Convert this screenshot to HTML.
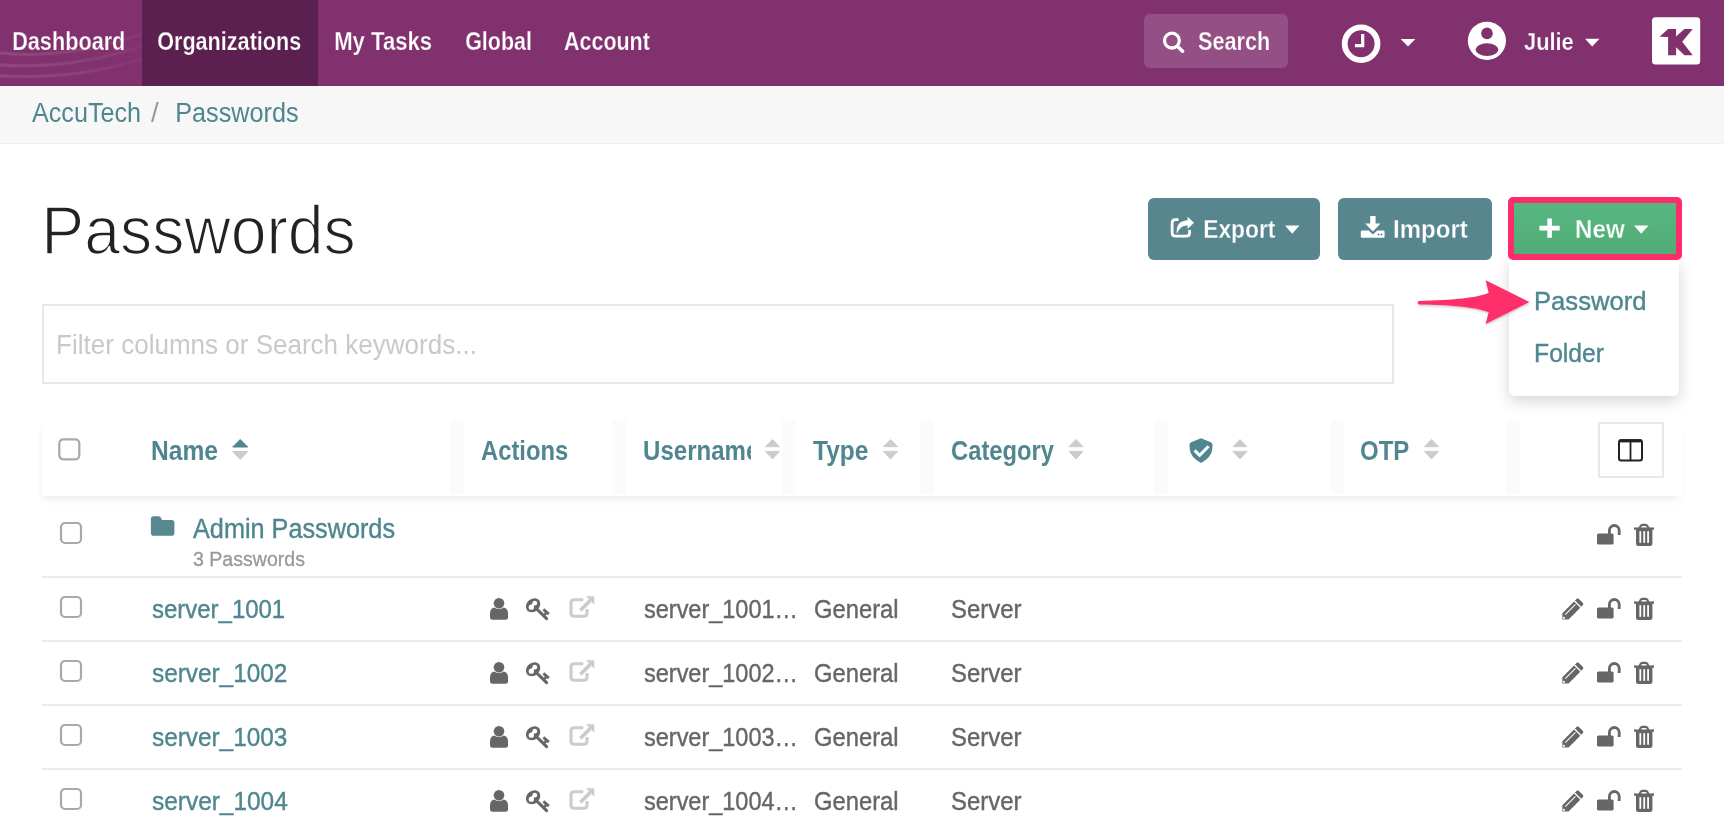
<!DOCTYPE html>
<html><head><meta charset="utf-8"><title>Passwords</title>
<style>
html,body{margin:0;padding:0;width:1724px;height:830px;overflow:hidden;background:#fff;font-family:"Liberation Sans",sans-serif;}
.b{position:absolute;box-sizing:border-box;}
.t{position:absolute;white-space:nowrap;font-family:"Liberation Sans",sans-serif;}
svg{position:absolute;left:0;top:0;overflow:visible}
</style></head><body>
<!-- top nav -->
<div class="b" style="left:0;top:0;width:1724px;height:86px;background:#82316f"></div>
<svg width="142" height="86" style="left:0;top:0;overflow:hidden"><defs><linearGradient id="sw" x1="0" y1="0" x2="1" y2="0"><stop offset="0" stop-color="#fff" stop-opacity="0.11"/><stop offset="0.6" stop-color="#fff" stop-opacity="0.07"/><stop offset="1" stop-color="#fff" stop-opacity="0.02"/></linearGradient></defs>
  <path d="M-5 52.5 Q70 61 150 31" stroke="url(#sw)" stroke-width="3" fill="none"/>
  <path d="M-5 64.5 Q75 71 150 43" stroke="url(#sw)" stroke-width="3" fill="none"/>
  <path d="M-5 75.5 Q80 81 150 56" stroke="url(#sw)" stroke-width="3" fill="none"/>
</svg>
<div class="b" style="left:142px;top:0;width:176px;height:86px;background:#5b2050"></div>
<div class="b" style="left:1144px;top:14px;width:144px;height:54px;background:rgba(255,255,255,0.15);border-radius:6px"></div>
<!-- breadcrumb -->
<div class="b" style="left:0;top:86px;width:1724px;height:58px;background:#f7f7f7;border-bottom:1px solid #efefef"></div>

<!-- buttons -->
<div class="b" style="left:1148px;top:198px;width:172px;height:62px;background:#57868e;border-radius:6px"></div>
<div class="b" style="left:1338px;top:198px;width:154px;height:62px;background:#57868e;border-radius:6px"></div>
<!-- dropdown -->
<div class="b" style="left:1509px;top:260px;width:170px;height:136px;background:#fff;border-radius:0 0 6px 6px;box-shadow:0 5px 15px rgba(0,0,0,0.17)"></div>
<div class="b" style="left:1508px;top:197px;width:174px;height:63px;background:linear-gradient(#57b780,#52ac77);border:6px solid #fd2c6a;border-radius:5px"></div>

<!-- search input -->
<div class="b" style="left:42px;top:304px;width:1352px;height:80px;border:2px solid #e8e8e8;background:#fff"></div>

<!-- table header -->
<div class="b" style="left:42px;top:421px;width:1640px;height:75px;background:#fff;box-shadow:0 7px 9px -3px rgba(0,0,0,0.06), -4px 4px 7px -3px rgba(0,0,0,0.035)"></div>
<div class="b" style="left:450px;top:420px;width:14px;height:74px;background:#fbfbfb"></div>
<div class="b" style="left:612px;top:420px;width:14px;height:74px;background:#fbfbfb"></div>
<div class="b" style="left:782px;top:420px;width:14px;height:74px;background:#fbfbfb"></div>
<div class="b" style="left:920px;top:420px;width:14px;height:74px;background:#fbfbfb"></div>
<div class="b" style="left:1154px;top:420px;width:14px;height:74px;background:#fbfbfb"></div>
<div class="b" style="left:1331px;top:420px;width:13px;height:74px;background:#fbfbfb"></div>
<div class="b" style="left:1506px;top:420px;width:14px;height:74px;background:#fbfbfb"></div>
<div class="b" style="left:1598px;top:422px;width:66px;height:56px;border:2px solid #e8e8e8;background:#fff"></div>

<!-- row lines -->
<div class="b" style="left:42px;top:576px;width:1640px;height:2px;background:#ebebeb"></div>
<div class="b" style="left:42px;top:640px;width:1640px;height:2px;background:#ebebeb"></div>
<div class="b" style="left:42px;top:704px;width:1640px;height:2px;background:#ebebeb"></div>
<div class="b" style="left:42px;top:768px;width:1640px;height:2px;background:#ebebeb"></div>

<!--ICONS-->
<svg width="1724" height="830">
  <defs>
    <g id="chk"><rect x="1" y="1" width="20" height="20" rx="4" ry="4" fill="none" stroke="#a9a9a9" stroke-width="2.2"/></g>
    <g id="sortg"><path d="M0.5 7.7 L7.5 0.5 L14.5 7.7 Z" fill="#cccccc" stroke="#cccccc" stroke-width="1" stroke-linejoin="round"/><path d="M0.5 12.4 L14.5 12.4 L7.5 20 Z" fill="#cccccc" stroke="#cccccc" stroke-width="1" stroke-linejoin="round"/></g>
    <g id="user">
      <circle cx="9" cy="5.3" r="5.3" fill="#666"/>
      <path d="M4.2 9.6 Q9 12.6 13.8 9.6 Q18 10.6 18 15.5 L18 19 Q18 21.8 15.5 21.8 L2.5 21.8 Q0 21.8 0 19 L0 15.5 Q0 10.6 4.2 9.6 Z" fill="#666"/>
    </g>
    <g id="key">
      <ellipse cx="7.1" cy="7.0" rx="7.9" ry="6.3" transform="rotate(-42 7.1 7.0)" fill="#666"/>
      <circle cx="5.3" cy="9.0" r="2.6" fill="#fff"/>
      <circle cx="8.8" cy="5.0" r="2.4" fill="#fff"/>
      <path d="M5.5 8.2 L8.2 5.4" stroke="#fff" stroke-width="2.6"/>
      <path d="M10.4 10.4 L20.6 20.4" stroke="#666" stroke-width="3" stroke-linecap="round"/>
      <path d="M17.4 11.2 L22.8 15.9" stroke="#666" stroke-width="2.8"/>
      <path d="M18.2 16.9 L21 14" stroke="#666" stroke-width="2.6"/>
    </g>
    <g id="ext">
      <path d="M14 3.7 L5 3.7 Q1.7 3.7 1.7 7 L1.7 17 Q1.7 20.3 5 20.3 L14.4 20.3 Q17.7 20.3 17.7 17 L17.7 13" fill="none" stroke="#cccccc" stroke-width="3.1"/>
      <path d="M11 14.4 L21.6 3.9" stroke="#cccccc" stroke-width="3.6"/>
      <path d="M16.7 0.3 L25 0.3 L25 8.8 Z" fill="#cccccc"/>
    </g>
    <g id="pencil">
      <g transform="translate(0.3,21.5) rotate(-45)">
        <path d="M0 0 L4.5 -4.4 L21 -4.4 L21 4.4 L4.5 4.4 Z" fill="#666"/>
        <path d="M1.4 -1.1 L3.2 -1.1 L3.2 1.1 L1.4 1.1 Z" fill="#fff"/>
        <path d="M5.5 -1.4 L20 -1.4" stroke="#fff" stroke-width="1.1"/>
        <path d="M22.4 -4.4 L24.8 -4.4 Q26.2 -4.4 26.2 -3 L26.2 3 Q26.2 4.4 24.8 4.4 L22.4 4.4 Z" fill="#666"/>
      </g>
    </g>
    <g id="unlock">
      <rect x="0" y="9" width="16.6" height="11" rx="1.6" fill="#666"/>
      <path d="M12.4 9.5 L12.4 5.9 A4.9 4.9 0 0 1 22.2 5.9 L22.2 10.5" fill="none" stroke="#666" stroke-width="2.8"/>
    </g>
    <g id="trash">
      <path d="M0 4.6 L20 4.6" stroke="#666" stroke-width="2.3"/>
      <path d="M5.4 4.2 L6.6 2 Q7.2 0.9 8.4 0.9 L11.6 0.9 Q12.8 0.9 13.4 2 L14.6 4.2" fill="none" stroke="#666" stroke-width="2.2"/>
      <path d="M2 5 L18.4 5 L18.4 19.5 Q18.4 22 15.9 22 L4.5 22 Q2 22 2 19.5 Z" fill="#666"/>
      <rect x="5.4" y="7.2" width="1.8" height="11.6" fill="#fff"/>
      <rect x="9.3" y="7.2" width="1.8" height="11.6" fill="#fff"/>
      <rect x="13.2" y="7.2" width="1.8" height="11.6" fill="#fff"/>
    </g>
  </defs>

  <!-- nav icons -->
  <circle cx="1171.9" cy="40.6" r="7.4" fill="none" stroke="#fff" stroke-width="3.3"/>
  <path d="M1177.4 46.2 L1182.6 51.2" stroke="#fff" stroke-width="3.6" stroke-linecap="round"/>
  <circle cx="1361.1" cy="43.7" r="16.4" fill="none" stroke="#fff" stroke-width="5.8"/>
  <path d="M1362.7 34 L1362.7 45.55 L1354.9 45.55" fill="none" stroke="#fff" stroke-width="3.2"/>
  <path d="M1400.6 39 L1415.4 39 L1408 46.5 Z" fill="#fff"/>
  <circle cx="1486.9" cy="40.8" r="19.1" fill="#fff"/>
  <circle cx="1487" cy="33.4" r="5.8" fill="#82316f"/>
  <ellipse cx="1487" cy="49.6" rx="11.4" ry="6.3" fill="#82316f"/>
  <path d="M1585 38.7 L1599.5 38.7 L1592.2 46.5 Z" fill="#fff"/>
  <rect x="1652" y="17.2" width="48.2" height="47.2" rx="3.5" fill="#fff"/>
  <path d="M1659.5 36.8 L1668.1 28.9 L1676.1 28.9 L1676.1 36.4 L1684.4 28.9 L1692.7 28.9 L1682.2 41.8 L1692.7 55.2 L1684.4 55.2 L1676.1 47.2 L1676.1 55.2 L1668.1 55.2 L1668.1 36.9 Z" fill="#82316f"/>

  <!-- button icons -->
  <path d="M1178.5 219.7 L1175.6 219.7 Q1172.1 219.7 1172.1 223.2 L1172.1 232.7 Q1172.1 236.2 1175.6 236.2 L1186.1 236.2 Q1189.6 236.2 1189.6 232.7 L1189.6 230" fill="none" stroke="#fff" stroke-width="2.8"/>
  <path d="M1176.9 233.9 Q1175.2 221 1187.6 220.2 L1187.6 216.7 L1194 222.8 L1187.6 228.9 L1187.6 225.4 Q1180 225 1176.9 233.9 Z" fill="#fff"/>
  <path d="M1285 225.5 L1299.5 225.5 L1292.2 233.8 Z" fill="#fff"/>
  <path d="M1370.2 216 L1375.6 216 L1375.6 223.6 L1380.6 223.6 L1372.9 231.6 L1365.2 223.6 L1370.2 223.6 Z" fill="#fff"/>
  <path d="M1362.2 230.4 L1368.6 230.4 L1372.9 234.4 L1377.2 230.4 L1383.3 230.4 Q1384.6 230.4 1384.6 231.8 L1384.6 236.4 Q1384.6 237.8 1383.3 237.8 L1362.2 237.8 Q1360.8 237.8 1360.8 236.4 L1360.8 231.8 Q1360.8 230.4 1362.2 230.4 Z" fill="#fff"/>
  <circle cx="1378.6" cy="234.4" r="1" fill="#57868e"/><circle cx="1381.6" cy="234.4" r="1" fill="#57868e"/>
  <path d="M1549.6 218.4 L1549.6 237.8 M1539.4 228.1 L1559.7 228.1" stroke="#fff" stroke-width="4.6"/>
  <path d="M1634 225.5 L1648.5 225.5 L1641.2 233.8 Z" fill="#fff"/>

  <!-- pink arrow -->
  <g filter="url(#sh)">
  <path d="M1419.4 300.9 C1455 300.2 1478 297.5 1488.7 292.7 L1485.6 280.2 L1529.4 302.1 L1485.6 324 L1488.7 312.3 C1478 307.8 1455 304.9 1419.4 304.5 A1.8 1.8 0 0 1 1419.4 300.9 Z" fill="#fe2d6a"/>
  </g>
  <defs><filter id="sh" x="-10%" y="-30%" width="120%" height="160%"><feDropShadow dx="0.5" dy="1.2" stdDeviation="1" flood-color="#000" flood-opacity="0.25"/></filter></defs>

  <!-- table header icons -->
  <g transform="translate(58.3,438.3)"><rect x="1" y="1" width="20" height="20" rx="4" ry="4" fill="none" stroke="#a9a9a9" stroke-width="2.2"/></g>
  <path d="M232.7 447 L240.2 439.5 L247.7 447 Z" fill="#4f8690" stroke="#4f8690" stroke-width="1" stroke-linejoin="round"/>
  <path d="M232.7 451.5 L247.7 451.5 L240.2 459.5 Z" fill="#cccccc" stroke="#cccccc" stroke-width="1" stroke-linejoin="round"/>
  <g transform="translate(765,439)"><path d="M0.5 7.7 L7.5 0.5 L14.5 7.7 Z" fill="#cccccc" stroke="#cccccc" stroke-width="1" stroke-linejoin="round"/><path d="M0.5 12.4 L14.5 12.4 L7.5 20 Z" fill="#cccccc" stroke="#cccccc" stroke-width="1" stroke-linejoin="round"/></g>
  <g transform="translate(883,439)"><path d="M0.5 7.7 L7.5 0.5 L14.5 7.7 Z" fill="#cccccc" stroke="#cccccc" stroke-width="1" stroke-linejoin="round"/><path d="M0.5 12.4 L14.5 12.4 L7.5 20 Z" fill="#cccccc" stroke="#cccccc" stroke-width="1" stroke-linejoin="round"/></g>
  <g transform="translate(1068.5,439)"><path d="M0.5 7.7 L7.5 0.5 L14.5 7.7 Z" fill="#cccccc" stroke="#cccccc" stroke-width="1" stroke-linejoin="round"/><path d="M0.5 12.4 L14.5 12.4 L7.5 20 Z" fill="#cccccc" stroke="#cccccc" stroke-width="1" stroke-linejoin="round"/></g>
  <g transform="translate(1232.5,439)"><path d="M0.5 7.7 L7.5 0.5 L14.5 7.7 Z" fill="#cccccc" stroke="#cccccc" stroke-width="1" stroke-linejoin="round"/><path d="M0.5 12.4 L14.5 12.4 L7.5 20 Z" fill="#cccccc" stroke="#cccccc" stroke-width="1" stroke-linejoin="round"/></g>
  <g transform="translate(1424,439)"><path d="M0.5 7.7 L7.5 0.5 L14.5 7.7 Z" fill="#cccccc" stroke="#cccccc" stroke-width="1" stroke-linejoin="round"/><path d="M0.5 12.4 L14.5 12.4 L7.5 20 Z" fill="#cccccc" stroke="#cccccc" stroke-width="1" stroke-linejoin="round"/></g>
  <path d="M1201 438.2 L1191.2 442.2 Q1189.4 443 1189.5 444.9 L1189.8 449.5 Q1190.6 457.5 1201 462.9 Q1211.4 457.5 1212.2 449.5 L1212.5 444.9 Q1212.6 443 1210.8 442.2 Z" fill="#4f8690"/>
  <path d="M1194.6 450.4 L1199.6 455.4 L1208.6 446.3" fill="none" stroke="#fff" stroke-width="3"/>
  <rect x="1619" y="440.2" width="23" height="20.2" rx="2.2" fill="none" stroke="#222" stroke-width="2"/>
  <path d="M1619.5 440.8 L1641.5 440.8" stroke="#222" stroke-width="3.2"/>
  <path d="M1630.5 440.4 L1630.5 460.2" stroke="#222" stroke-width="1.8"/>

  <!-- folder row -->
  <g transform="translate(60,522)"><rect x="1" y="1" width="20" height="20" rx="4" ry="4" fill="none" stroke="#a9a9a9" stroke-width="2.2"/></g>
  <path d="M153.5 516.2 L158 516.2 Q160.8 516.2 161.4 518.6 L161.8 520 L171.6 520 Q174.4 520 174.4 522.8 L174.4 532.9 Q174.4 535.7 171.6 535.7 L153.7 535.7 Q150.9 535.7 150.9 532.9 L150.9 518.8 Q150.9 516.2 153.5 516.2 Z" fill="#57888f"/>
  <g transform="translate(1597,524.5)">
      <rect x="0" y="9" width="16.6" height="11" rx="1.6" fill="#666"/>
      <path d="M12.4 9.5 L12.4 5.9 A4.9 4.9 0 0 1 22.2 5.9 L22.2 10.5" fill="none" stroke="#666" stroke-width="2.8"/>
    </g>
  <g transform="translate(1634,524)">
      <path d="M0 4.6 L20 4.6" stroke="#666" stroke-width="2.3"/>
      <path d="M5.4 4.2 L6.6 2 Q7.2 0.9 8.4 0.9 L11.6 0.9 Q12.8 0.9 13.4 2 L14.6 4.2" fill="none" stroke="#666" stroke-width="2.2"/>
      <path d="M2 5 L18.4 5 L18.4 19.5 Q18.4 22 15.9 22 L4.5 22 Q2 22 2 19.5 Z" fill="#666"/>
      <rect x="5.4" y="7.2" width="1.8" height="11.6" fill="#fff"/>
      <rect x="9.3" y="7.2" width="1.8" height="11.6" fill="#fff"/>
      <rect x="13.2" y="7.2" width="1.8" height="11.6" fill="#fff"/>
    </g>

  <!-- server rows -->
  <g transform="translate(0,0)">
    <g transform="translate(60,596)"><rect x="1" y="1" width="20" height="20" rx="4" ry="4" fill="none" stroke="#a9a9a9" stroke-width="2.2"/></g>
    <g transform="translate(490,598)">
      <circle cx="9" cy="5.3" r="5.3" fill="#666"/>
      <path d="M4.2 9.6 Q9 12.6 13.8 9.6 Q18 10.6 18 15.5 L18 19 Q18 21.8 15.5 21.8 L2.5 21.8 Q0 21.8 0 19 L0 15.5 Q0 10.6 4.2 9.6 Z" fill="#666"/>
    </g>
    <g transform="translate(526,598.2)">
      <ellipse cx="7.1" cy="7.0" rx="7.9" ry="6.3" transform="rotate(-42 7.1 7.0)" fill="#666"/>
      <circle cx="5.3" cy="9.0" r="2.6" fill="#fff"/>
      <circle cx="8.8" cy="5.0" r="2.4" fill="#fff"/>
      <path d="M5.5 8.2 L8.2 5.4" stroke="#fff" stroke-width="2.6"/>
      <path d="M10.4 10.4 L20.6 20.4" stroke="#666" stroke-width="3" stroke-linecap="round"/>
      <path d="M17.4 11.2 L22.8 15.9" stroke="#666" stroke-width="2.8"/>
      <path d="M18.2 16.9 L21 14" stroke="#666" stroke-width="2.6"/>
    </g>
    <g transform="translate(569.3,596)">
      <path d="M14 3.7 L5 3.7 Q1.7 3.7 1.7 7 L1.7 17 Q1.7 20.3 5 20.3 L14.4 20.3 Q17.7 20.3 17.7 17 L17.7 13" fill="none" stroke="#cccccc" stroke-width="3.1"/>
      <path d="M11 14.4 L21.6 3.9" stroke="#cccccc" stroke-width="3.6"/>
      <path d="M16.7 0.3 L25 0.3 L25 8.8 Z" fill="#cccccc"/>
    </g>
    <g transform="translate(1562,598)">
      <g transform="translate(0.3,21.5) rotate(-45)">
        <path d="M0 0 L4.5 -4.4 L21 -4.4 L21 4.4 L4.5 4.4 Z" fill="#666"/>
        <path d="M1.4 -1.1 L3.2 -1.1 L3.2 1.1 L1.4 1.1 Z" fill="#fff"/>
        <path d="M5.5 -1.4 L20 -1.4" stroke="#fff" stroke-width="1.1"/>
        <path d="M22.4 -4.4 L24.8 -4.4 Q26.2 -4.4 26.2 -3 L26.2 3 Q26.2 4.4 24.8 4.4 L22.4 4.4 Z" fill="#666"/>
      </g>
    </g>
    <g transform="translate(1597,598.5)">
      <rect x="0" y="9" width="16.6" height="11" rx="1.6" fill="#666"/>
      <path d="M12.4 9.5 L12.4 5.9 A4.9 4.9 0 0 1 22.2 5.9 L22.2 10.5" fill="none" stroke="#666" stroke-width="2.8"/>
    </g>
    <g transform="translate(1634,598)">
      <path d="M0 4.6 L20 4.6" stroke="#666" stroke-width="2.3"/>
      <path d="M5.4 4.2 L6.6 2 Q7.2 0.9 8.4 0.9 L11.6 0.9 Q12.8 0.9 13.4 2 L14.6 4.2" fill="none" stroke="#666" stroke-width="2.2"/>
      <path d="M2 5 L18.4 5 L18.4 19.5 Q18.4 22 15.9 22 L4.5 22 Q2 22 2 19.5 Z" fill="#666"/>
      <rect x="5.4" y="7.2" width="1.8" height="11.6" fill="#fff"/>
      <rect x="9.3" y="7.2" width="1.8" height="11.6" fill="#fff"/>
      <rect x="13.2" y="7.2" width="1.8" height="11.6" fill="#fff"/>
    </g>
  </g>
  <g transform="translate(0,64)">
    <g transform="translate(60,596)"><rect x="1" y="1" width="20" height="20" rx="4" ry="4" fill="none" stroke="#a9a9a9" stroke-width="2.2"/></g>
    <g transform="translate(490,598)">
      <circle cx="9" cy="5.3" r="5.3" fill="#666"/>
      <path d="M4.2 9.6 Q9 12.6 13.8 9.6 Q18 10.6 18 15.5 L18 19 Q18 21.8 15.5 21.8 L2.5 21.8 Q0 21.8 0 19 L0 15.5 Q0 10.6 4.2 9.6 Z" fill="#666"/>
    </g>
    <g transform="translate(526,598.2)">
      <ellipse cx="7.1" cy="7.0" rx="7.9" ry="6.3" transform="rotate(-42 7.1 7.0)" fill="#666"/>
      <circle cx="5.3" cy="9.0" r="2.6" fill="#fff"/>
      <circle cx="8.8" cy="5.0" r="2.4" fill="#fff"/>
      <path d="M5.5 8.2 L8.2 5.4" stroke="#fff" stroke-width="2.6"/>
      <path d="M10.4 10.4 L20.6 20.4" stroke="#666" stroke-width="3" stroke-linecap="round"/>
      <path d="M17.4 11.2 L22.8 15.9" stroke="#666" stroke-width="2.8"/>
      <path d="M18.2 16.9 L21 14" stroke="#666" stroke-width="2.6"/>
    </g>
    <g transform="translate(569.3,596)">
      <path d="M14 3.7 L5 3.7 Q1.7 3.7 1.7 7 L1.7 17 Q1.7 20.3 5 20.3 L14.4 20.3 Q17.7 20.3 17.7 17 L17.7 13" fill="none" stroke="#cccccc" stroke-width="3.1"/>
      <path d="M11 14.4 L21.6 3.9" stroke="#cccccc" stroke-width="3.6"/>
      <path d="M16.7 0.3 L25 0.3 L25 8.8 Z" fill="#cccccc"/>
    </g>
    <g transform="translate(1562,598)">
      <g transform="translate(0.3,21.5) rotate(-45)">
        <path d="M0 0 L4.5 -4.4 L21 -4.4 L21 4.4 L4.5 4.4 Z" fill="#666"/>
        <path d="M1.4 -1.1 L3.2 -1.1 L3.2 1.1 L1.4 1.1 Z" fill="#fff"/>
        <path d="M5.5 -1.4 L20 -1.4" stroke="#fff" stroke-width="1.1"/>
        <path d="M22.4 -4.4 L24.8 -4.4 Q26.2 -4.4 26.2 -3 L26.2 3 Q26.2 4.4 24.8 4.4 L22.4 4.4 Z" fill="#666"/>
      </g>
    </g>
    <g transform="translate(1597,598.5)">
      <rect x="0" y="9" width="16.6" height="11" rx="1.6" fill="#666"/>
      <path d="M12.4 9.5 L12.4 5.9 A4.9 4.9 0 0 1 22.2 5.9 L22.2 10.5" fill="none" stroke="#666" stroke-width="2.8"/>
    </g>
    <g transform="translate(1634,598)">
      <path d="M0 4.6 L20 4.6" stroke="#666" stroke-width="2.3"/>
      <path d="M5.4 4.2 L6.6 2 Q7.2 0.9 8.4 0.9 L11.6 0.9 Q12.8 0.9 13.4 2 L14.6 4.2" fill="none" stroke="#666" stroke-width="2.2"/>
      <path d="M2 5 L18.4 5 L18.4 19.5 Q18.4 22 15.9 22 L4.5 22 Q2 22 2 19.5 Z" fill="#666"/>
      <rect x="5.4" y="7.2" width="1.8" height="11.6" fill="#fff"/>
      <rect x="9.3" y="7.2" width="1.8" height="11.6" fill="#fff"/>
      <rect x="13.2" y="7.2" width="1.8" height="11.6" fill="#fff"/>
    </g>
  </g>
  <g transform="translate(0,128)">
    <g transform="translate(60,596)"><rect x="1" y="1" width="20" height="20" rx="4" ry="4" fill="none" stroke="#a9a9a9" stroke-width="2.2"/></g>
    <g transform="translate(490,598)">
      <circle cx="9" cy="5.3" r="5.3" fill="#666"/>
      <path d="M4.2 9.6 Q9 12.6 13.8 9.6 Q18 10.6 18 15.5 L18 19 Q18 21.8 15.5 21.8 L2.5 21.8 Q0 21.8 0 19 L0 15.5 Q0 10.6 4.2 9.6 Z" fill="#666"/>
    </g>
    <g transform="translate(526,598.2)">
      <ellipse cx="7.1" cy="7.0" rx="7.9" ry="6.3" transform="rotate(-42 7.1 7.0)" fill="#666"/>
      <circle cx="5.3" cy="9.0" r="2.6" fill="#fff"/>
      <circle cx="8.8" cy="5.0" r="2.4" fill="#fff"/>
      <path d="M5.5 8.2 L8.2 5.4" stroke="#fff" stroke-width="2.6"/>
      <path d="M10.4 10.4 L20.6 20.4" stroke="#666" stroke-width="3" stroke-linecap="round"/>
      <path d="M17.4 11.2 L22.8 15.9" stroke="#666" stroke-width="2.8"/>
      <path d="M18.2 16.9 L21 14" stroke="#666" stroke-width="2.6"/>
    </g>
    <g transform="translate(569.3,596)">
      <path d="M14 3.7 L5 3.7 Q1.7 3.7 1.7 7 L1.7 17 Q1.7 20.3 5 20.3 L14.4 20.3 Q17.7 20.3 17.7 17 L17.7 13" fill="none" stroke="#cccccc" stroke-width="3.1"/>
      <path d="M11 14.4 L21.6 3.9" stroke="#cccccc" stroke-width="3.6"/>
      <path d="M16.7 0.3 L25 0.3 L25 8.8 Z" fill="#cccccc"/>
    </g>
    <g transform="translate(1562,598)">
      <g transform="translate(0.3,21.5) rotate(-45)">
        <path d="M0 0 L4.5 -4.4 L21 -4.4 L21 4.4 L4.5 4.4 Z" fill="#666"/>
        <path d="M1.4 -1.1 L3.2 -1.1 L3.2 1.1 L1.4 1.1 Z" fill="#fff"/>
        <path d="M5.5 -1.4 L20 -1.4" stroke="#fff" stroke-width="1.1"/>
        <path d="M22.4 -4.4 L24.8 -4.4 Q26.2 -4.4 26.2 -3 L26.2 3 Q26.2 4.4 24.8 4.4 L22.4 4.4 Z" fill="#666"/>
      </g>
    </g>
    <g transform="translate(1597,598.5)">
      <rect x="0" y="9" width="16.6" height="11" rx="1.6" fill="#666"/>
      <path d="M12.4 9.5 L12.4 5.9 A4.9 4.9 0 0 1 22.2 5.9 L22.2 10.5" fill="none" stroke="#666" stroke-width="2.8"/>
    </g>
    <g transform="translate(1634,598)">
      <path d="M0 4.6 L20 4.6" stroke="#666" stroke-width="2.3"/>
      <path d="M5.4 4.2 L6.6 2 Q7.2 0.9 8.4 0.9 L11.6 0.9 Q12.8 0.9 13.4 2 L14.6 4.2" fill="none" stroke="#666" stroke-width="2.2"/>
      <path d="M2 5 L18.4 5 L18.4 19.5 Q18.4 22 15.9 22 L4.5 22 Q2 22 2 19.5 Z" fill="#666"/>
      <rect x="5.4" y="7.2" width="1.8" height="11.6" fill="#fff"/>
      <rect x="9.3" y="7.2" width="1.8" height="11.6" fill="#fff"/>
      <rect x="13.2" y="7.2" width="1.8" height="11.6" fill="#fff"/>
    </g>
  </g>
  <g transform="translate(0,192)">
    <g transform="translate(60,596)"><rect x="1" y="1" width="20" height="20" rx="4" ry="4" fill="none" stroke="#a9a9a9" stroke-width="2.2"/></g>
    <g transform="translate(490,598)">
      <circle cx="9" cy="5.3" r="5.3" fill="#666"/>
      <path d="M4.2 9.6 Q9 12.6 13.8 9.6 Q18 10.6 18 15.5 L18 19 Q18 21.8 15.5 21.8 L2.5 21.8 Q0 21.8 0 19 L0 15.5 Q0 10.6 4.2 9.6 Z" fill="#666"/>
    </g>
    <g transform="translate(526,598.2)">
      <ellipse cx="7.1" cy="7.0" rx="7.9" ry="6.3" transform="rotate(-42 7.1 7.0)" fill="#666"/>
      <circle cx="5.3" cy="9.0" r="2.6" fill="#fff"/>
      <circle cx="8.8" cy="5.0" r="2.4" fill="#fff"/>
      <path d="M5.5 8.2 L8.2 5.4" stroke="#fff" stroke-width="2.6"/>
      <path d="M10.4 10.4 L20.6 20.4" stroke="#666" stroke-width="3" stroke-linecap="round"/>
      <path d="M17.4 11.2 L22.8 15.9" stroke="#666" stroke-width="2.8"/>
      <path d="M18.2 16.9 L21 14" stroke="#666" stroke-width="2.6"/>
    </g>
    <g transform="translate(569.3,596)">
      <path d="M14 3.7 L5 3.7 Q1.7 3.7 1.7 7 L1.7 17 Q1.7 20.3 5 20.3 L14.4 20.3 Q17.7 20.3 17.7 17 L17.7 13" fill="none" stroke="#cccccc" stroke-width="3.1"/>
      <path d="M11 14.4 L21.6 3.9" stroke="#cccccc" stroke-width="3.6"/>
      <path d="M16.7 0.3 L25 0.3 L25 8.8 Z" fill="#cccccc"/>
    </g>
    <g transform="translate(1562,598)">
      <g transform="translate(0.3,21.5) rotate(-45)">
        <path d="M0 0 L4.5 -4.4 L21 -4.4 L21 4.4 L4.5 4.4 Z" fill="#666"/>
        <path d="M1.4 -1.1 L3.2 -1.1 L3.2 1.1 L1.4 1.1 Z" fill="#fff"/>
        <path d="M5.5 -1.4 L20 -1.4" stroke="#fff" stroke-width="1.1"/>
        <path d="M22.4 -4.4 L24.8 -4.4 Q26.2 -4.4 26.2 -3 L26.2 3 Q26.2 4.4 24.8 4.4 L22.4 4.4 Z" fill="#666"/>
      </g>
    </g>
    <g transform="translate(1597,598.5)">
      <rect x="0" y="9" width="16.6" height="11" rx="1.6" fill="#666"/>
      <path d="M12.4 9.5 L12.4 5.9 A4.9 4.9 0 0 1 22.2 5.9 L22.2 10.5" fill="none" stroke="#666" stroke-width="2.8"/>
    </g>
    <g transform="translate(1634,598)">
      <path d="M0 4.6 L20 4.6" stroke="#666" stroke-width="2.3"/>
      <path d="M5.4 4.2 L6.6 2 Q7.2 0.9 8.4 0.9 L11.6 0.9 Q12.8 0.9 13.4 2 L14.6 4.2" fill="none" stroke="#666" stroke-width="2.2"/>
      <path d="M2 5 L18.4 5 L18.4 19.5 Q18.4 22 15.9 22 L4.5 22 Q2 22 2 19.5 Z" fill="#666"/>
      <rect x="5.4" y="7.2" width="1.8" height="11.6" fill="#fff"/>
      <rect x="9.3" y="7.2" width="1.8" height="11.6" fill="#fff"/>
      <rect x="13.2" y="7.2" width="1.8" height="11.6" fill="#fff"/>
    </g>
  </g>
</svg>

<span class="t" style="left:12.18px;top:27.23px;font-size:25.65px;line-height:28px;font-weight:bold;color:#fff;-webkit-text-stroke:0.25px #82316f;transform:scaleX(0.8453);transform-origin:1.00px 0;">Dashboard</span>
<span class="t" style="left:157.28px;top:27.23px;font-size:25.65px;line-height:28px;font-weight:bold;color:#fff;-webkit-text-stroke:0.25px #5b2050;transform:scaleX(0.8430);transform-origin:1.00px 0;">Organizations</span>
<span class="t" style="left:334.38px;top:27.23px;font-size:25.65px;line-height:28px;font-weight:bold;color:#fff;-webkit-text-stroke:0.25px #82316f;transform:scaleX(0.8626);transform-origin:1.00px 0;">My Tasks</span>
<span class="t" style="left:464.68px;top:27.23px;font-size:25.65px;line-height:28px;font-weight:bold;color:#fff;-webkit-text-stroke:0.25px #82316f;transform:scaleX(0.8364);transform-origin:1.00px 0;">Global</span>
<span class="t" style="left:563.77px;top:27.23px;font-size:25.65px;line-height:28px;font-weight:bold;color:#fff;-webkit-text-stroke:0.25px #82316f;transform:scaleX(0.8372);transform-origin:0.00px 0;">Account</span>
<span class="t" style="left:1197.78px;top:27.02px;font-size:25.07px;line-height:28px;font-weight:bold;color:#fff;-webkit-text-stroke:0.25px #944f85;transform:scaleX(0.8635);transform-origin:0.00px 0;">Search</span>
<span class="t" style="left:1523.78px;top:27.73px;font-size:24.78px;line-height:27px;font-weight:bold;color:#fff;-webkit-text-stroke:0.25px #82316f;transform:scaleX(0.8812);transform-origin:0.00px 0;">Julie</span>
<span class="t" style="left:32.20px;top:97.20px;font-size:27.62px;line-height:31px;font-weight:normal;color:#4f8690;transform:scaleX(0.9109);transform-origin:0.00px 0;">AccuTech</span>
<span class="t" style="left:150.50px;top:97.20px;font-size:27.62px;line-height:31px;font-weight:normal;color:#999;transform:scaleX(0.9990);transform-origin:0.00px 0;">/</span>
<span class="t" style="left:174.60px;top:97.20px;font-size:27.62px;line-height:31px;font-weight:normal;color:#4f8690;transform:scaleX(0.9144);transform-origin:2.00px 0;">Passwords</span>
<span class="t" style="left:41.00px;top:191.30px;font-size:69.19px;line-height:78px;font-weight:normal;color:#222;-webkit-text-stroke:1.60px #fff;transform:scaleX(0.9292);transform-origin:5.00px 0;">Passwords</span>
<span class="t" style="left:1203.25px;top:213.95px;font-size:26.60px;line-height:30px;font-weight:bold;color:#fff;-webkit-text-stroke:0.30px #57868e;transform:scaleX(0.8589);transform-origin:1.00px 0;">Export</span>
<span class="t" style="left:1393.25px;top:213.95px;font-size:26.60px;line-height:30px;font-weight:bold;color:#fff;-webkit-text-stroke:0.30px #57868e;transform:scaleX(0.9026);transform-origin:1.00px 0;">Import</span>
<span class="t" style="left:1574.85px;top:213.95px;font-size:26.60px;line-height:30px;font-weight:bold;color:#fff;-webkit-text-stroke:0.30px #56b47e;transform:scaleX(0.9075);transform-origin:1.00px 0;">New</span>
<span class="t" style="left:1534.10px;top:285.60px;font-size:26.16px;line-height:30px;font-weight:normal;color:#4f8690;-webkit-text-stroke:0.40px #4f8690;transform:scaleX(0.9785);transform-origin:2.00px 0;">Password</span>
<span class="t" style="left:1534.20px;top:337.60px;font-size:26.02px;line-height:30px;font-weight:normal;color:#4f8690;-webkit-text-stroke:0.40px #4f8690;transform:scaleX(0.9476);transform-origin:2.00px 0;">Folder</span>
<span class="t" style="left:56.40px;top:328.80px;font-size:27.62px;line-height:31px;font-weight:normal;color:#c9c9c9;transform:scaleX(0.9424);transform-origin:2.00px 0;">Filter columns or Search keywords...</span>
<span class="t" style="left:150.80px;top:436.00px;font-size:26.74px;line-height:30px;font-weight:bold;color:#4f8690;transform:scaleX(0.9190);transform-origin:1.00px 0;">Name</span>
<span class="t" style="left:481.00px;top:436.00px;font-size:26.74px;line-height:30px;font-weight:bold;color:#4f8690;transform:scaleX(0.8892);transform-origin:0.00px 0;">Actions</span>
<div class="b" style="left:0;top:0;width:751px;height:830px;overflow:hidden"><span class="t" style="left:642.50px;top:436.00px;font-size:26.74px;line-height:30px;font-weight:bold;color:#4f8690;transform:scaleX(0.8986);transform-origin:1.00px 0;">Username</span></div>
<span class="t" style="left:813.20px;top:436.00px;font-size:26.74px;line-height:30px;font-weight:bold;color:#4f8690;transform:scaleX(0.9153);transform-origin:0.00px 0;">Type</span>
<span class="t" style="left:950.70px;top:436.00px;font-size:26.74px;line-height:30px;font-weight:bold;color:#4f8690;transform:scaleX(0.8877);transform-origin:1.00px 0;">Category</span>
<span class="t" style="left:1360.40px;top:436.00px;font-size:26.74px;line-height:30px;font-weight:bold;color:#4f8690;transform:scaleX(0.8960);transform-origin:1.00px 0;">OTP</span>
<span class="t" style="left:193.40px;top:514.40px;font-size:26.74px;line-height:30px;font-weight:normal;color:#4f8690;-webkit-text-stroke:0.40px #4f8690;transform:scaleX(0.9443);transform-origin:0.00px 0;">Admin Passwords</span>
<span class="t" style="left:193.35px;top:547.55px;font-size:19.77px;line-height:22px;font-weight:normal;color:#999;-webkit-text-stroke:0.30px #999;transform:scaleX(0.9897);transform-origin:0.00px 0;">3 Passwords</span>
<span class="t" style="left:152.20px;top:593.80px;font-size:26.31px;line-height:30px;font-weight:normal;color:#4f8690;-webkit-text-stroke:0.40px #4f8690;transform:scaleX(0.9110);transform-origin:0.00px 0;">server_1001</span>
<span class="t" style="left:644.00px;top:593.80px;font-size:26.31px;line-height:30px;font-weight:normal;color:#666;-webkit-text-stroke:0.40px #666;transform:scaleX(0.8931);transform-origin:0.00px 0;">server_1001…</span>
<span class="t" style="left:813.50px;top:593.80px;font-size:26.31px;line-height:30px;font-weight:normal;color:#666;-webkit-text-stroke:0.40px #666;transform:scaleX(0.9028);transform-origin:1.00px 0;">General</span>
<span class="t" style="left:950.70px;top:593.80px;font-size:26.31px;line-height:30px;font-weight:normal;color:#666;-webkit-text-stroke:0.40px #666;transform:scaleX(0.9101);transform-origin:1.00px 0;">Server</span>
<span class="t" style="left:152.20px;top:657.80px;font-size:26.31px;line-height:30px;font-weight:normal;color:#4f8690;-webkit-text-stroke:0.40px #4f8690;transform:scaleX(0.9254);transform-origin:0.00px 0;">server_1002</span>
<span class="t" style="left:644.00px;top:657.80px;font-size:26.31px;line-height:30px;font-weight:normal;color:#666;-webkit-text-stroke:0.40px #666;transform:scaleX(0.8931);transform-origin:0.00px 0;">server_1002…</span>
<span class="t" style="left:813.50px;top:657.80px;font-size:26.31px;line-height:30px;font-weight:normal;color:#666;-webkit-text-stroke:0.40px #666;transform:scaleX(0.9028);transform-origin:1.00px 0;">General</span>
<span class="t" style="left:950.70px;top:657.80px;font-size:26.31px;line-height:30px;font-weight:normal;color:#666;-webkit-text-stroke:0.40px #666;transform:scaleX(0.9101);transform-origin:1.00px 0;">Server</span>
<span class="t" style="left:152.20px;top:721.80px;font-size:26.31px;line-height:30px;font-weight:normal;color:#4f8690;-webkit-text-stroke:0.40px #4f8690;transform:scaleX(0.9254);transform-origin:0.00px 0;">server_1003</span>
<span class="t" style="left:644.00px;top:721.80px;font-size:26.31px;line-height:30px;font-weight:normal;color:#666;-webkit-text-stroke:0.40px #666;transform:scaleX(0.8931);transform-origin:0.00px 0;">server_1003…</span>
<span class="t" style="left:813.50px;top:721.80px;font-size:26.31px;line-height:30px;font-weight:normal;color:#666;-webkit-text-stroke:0.40px #666;transform:scaleX(0.9028);transform-origin:1.00px 0;">General</span>
<span class="t" style="left:950.70px;top:721.80px;font-size:26.31px;line-height:30px;font-weight:normal;color:#666;-webkit-text-stroke:0.40px #666;transform:scaleX(0.9101);transform-origin:1.00px 0;">Server</span>
<span class="t" style="left:152.20px;top:785.80px;font-size:26.31px;line-height:30px;font-weight:normal;color:#4f8690;-webkit-text-stroke:0.40px #4f8690;transform:scaleX(0.9288);transform-origin:0.00px 0;">server_1004</span>
<span class="t" style="left:644.00px;top:785.80px;font-size:26.31px;line-height:30px;font-weight:normal;color:#666;-webkit-text-stroke:0.40px #666;transform:scaleX(0.8931);transform-origin:0.00px 0;">server_1004…</span>
<span class="t" style="left:813.50px;top:785.80px;font-size:26.31px;line-height:30px;font-weight:normal;color:#666;-webkit-text-stroke:0.40px #666;transform:scaleX(0.9028);transform-origin:1.00px 0;">General</span>
<span class="t" style="left:950.70px;top:785.80px;font-size:26.31px;line-height:30px;font-weight:normal;color:#666;-webkit-text-stroke:0.40px #666;transform:scaleX(0.9101);transform-origin:1.00px 0;">Server</span>
</body></html>
